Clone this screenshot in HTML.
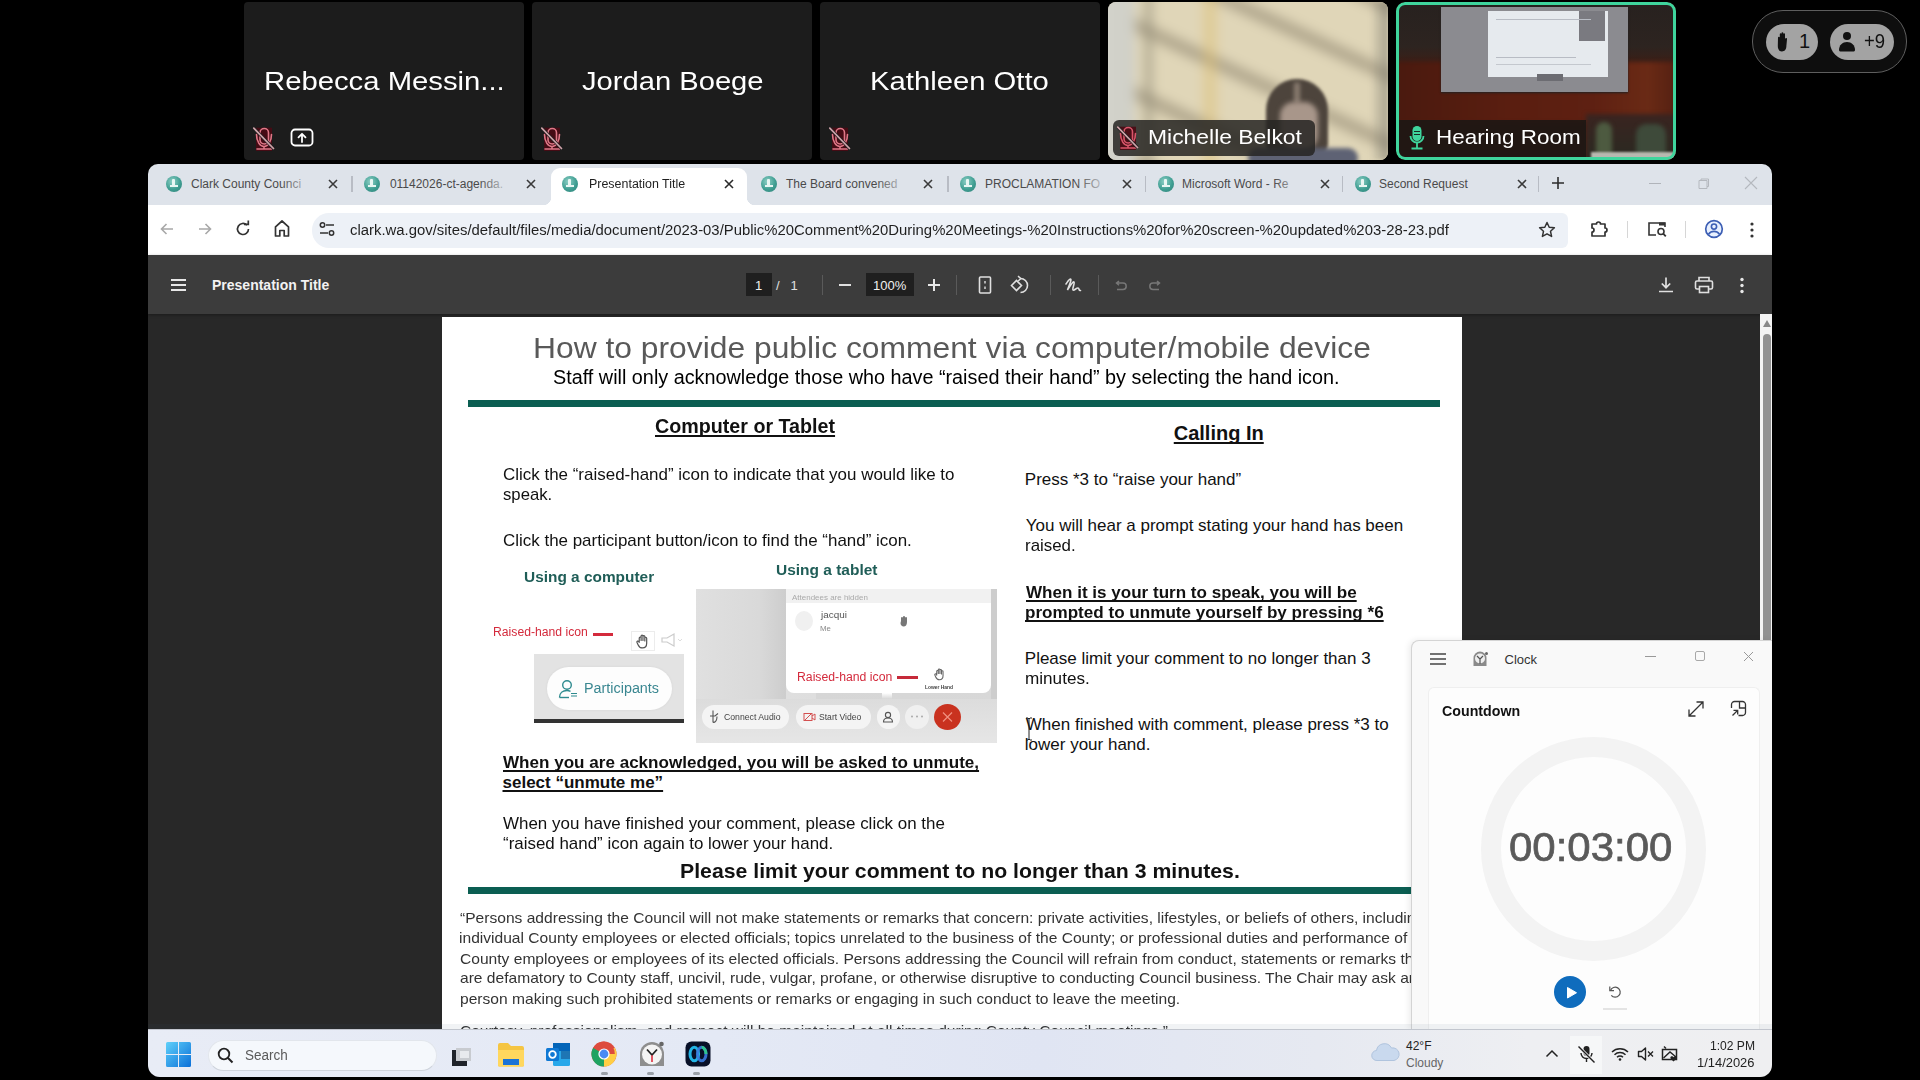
<!DOCTYPE html>
<html><head><meta charset="utf-8"><title>Meeting</title>
<style>
html,body{margin:0;padding:0;width:1920px;height:1080px;overflow:hidden;background:#000;font-family:"Liberation Sans",sans-serif;}
.a{position:absolute;}
.t{position:absolute;white-space:nowrap;transform-origin:0 0;}
svg{position:absolute;overflow:visible;}
.tile{position:absolute;top:2px;width:280px;height:158px;border-radius:4px;background:#1c1c1c;overflow:hidden;}
</style></head><body>

<div class="tile" style="left:244px"></div>
<div class="tile" style="left:532px"></div>
<div class="tile" style="left:820px"></div>
<svg style="left:253px;top:127px" width="22" height="25" viewBox="0 0 22 25"><rect x="3" y="0.7" width="16" height="23.3" fill="#4a0a14" opacity=".9"/><g fill="none" stroke="#e07888" stroke-width="1.6" stroke-linecap="round"><rect x="7" y="1.5" width="8.5" height="15.5" rx="4.2"/><path d="M3.5 7.5C3.5 14.5 7 19.5 11 19.5S18.5 14.5 18.5 7.5M11 19.5v2M4 22h14.5"/></g><path d="M0.8 1.2L20.5 21.5" stroke="#1c1c1c" stroke-width="3.2"/><path d="M0.8 1.2L20.5 21.5" stroke="#cfa3aa" stroke-width="1.7" stroke-linecap="round"/></svg>
<svg style="left:290px;top:128px" width="24" height="20" viewBox="0 0 24 20"><rect x="1.5" y="1.5" width="21" height="16" rx="3.5" fill="none" stroke="#fff" stroke-width="1.8"/><path d="M12 14V6M8.5 9.3L12 5.8l3.5 3.5" fill="none" stroke="#fff" stroke-width="1.8" stroke-linecap="round" stroke-linejoin="round"/></svg>
<svg style="left:541px;top:127px" width="22" height="25" viewBox="0 0 22 25"><rect x="3" y="0.7" width="16" height="23.3" fill="#4a0a14" opacity=".9"/><g fill="none" stroke="#e07888" stroke-width="1.6" stroke-linecap="round"><rect x="7" y="1.5" width="8.5" height="15.5" rx="4.2"/><path d="M3.5 7.5C3.5 14.5 7 19.5 11 19.5S18.5 14.5 18.5 7.5M11 19.5v2M4 22h14.5"/></g><path d="M0.8 1.2L20.5 21.5" stroke="#1c1c1c" stroke-width="3.2"/><path d="M0.8 1.2L20.5 21.5" stroke="#cfa3aa" stroke-width="1.7" stroke-linecap="round"/></svg>
<svg style="left:829px;top:127px" width="22" height="25" viewBox="0 0 22 25"><rect x="3" y="0.7" width="16" height="23.3" fill="#4a0a14" opacity=".9"/><g fill="none" stroke="#e07888" stroke-width="1.6" stroke-linecap="round"><rect x="7" y="1.5" width="8.5" height="15.5" rx="4.2"/><path d="M3.5 7.5C3.5 14.5 7 19.5 11 19.5S18.5 14.5 18.5 7.5M11 19.5v2M4 22h14.5"/></g><path d="M0.8 1.2L20.5 21.5" stroke="#1c1c1c" stroke-width="3.2"/><path d="M0.8 1.2L20.5 21.5" stroke="#cfa3aa" stroke-width="1.7" stroke-linecap="round"/></svg>

<div class="tile" style="left:1108px;background:#d8ceb0;border-radius:8px">
  <div class="a" style="left:-20px;top:-20px;width:320px;height:200px;filter:blur(5px);
     background:
       linear-gradient(90deg, #d4d4cc 0px, #d0d0c8 42px, rgba(0,0,0,0) 52px),
       linear-gradient(90deg, rgba(0,0,0,0) 52px, rgba(150,145,125,.55) 60px, rgba(0,0,0,0) 70px),
       linear-gradient(90deg, rgba(0,0,0,0) 110px, rgba(222,190,110,.5) 122px, rgba(0,0,0,0) 134px),
       repeating-linear-gradient(25deg, rgba(0,0,0,0) 0px, rgba(0,0,0,0) 26px, rgba(140,130,108,.6) 38px, rgba(0,0,0,0) 50px, rgba(0,0,0,0) 62px),
       #e0d6b8"></div>
  <div class="a" style="left:262px;top:0;width:18px;height:158px;background:linear-gradient(90deg,rgba(120,118,108,0),rgba(120,118,108,.55));filter:blur(2px)"></div>
  <div class="a" style="left:158px;top:77px;width:62px;height:80px;border-radius:31px 31px 16px 16px;background:#4d443c;filter:blur(1.5px)"></div>
  <div class="a" style="left:186px;top:80px;width:6px;height:22px;border-radius:3px;background:#8a7c70;filter:blur(2px)"></div>
  <div class="a" style="left:172px;top:100px;width:38px;height:50px;border-radius:14px 14px 18px 18px;background:#a8968a;filter:blur(2.5px)"></div>
  <div class="a" style="left:140px;top:146px;width:110px;height:20px;border-radius:12px;background:#5e6274;filter:blur(2px)"></div>
  <div class="a" style="left:5px;top:118px;width:202px;height:36px;border-radius:6px;background:rgba(38,36,34,.85)"></div>
</div>
<svg style="left:1117px;top:126px" width="22" height="25" viewBox="0 0 22 25"><rect x="3" y="0.7" width="16" height="23.3" fill="#4a0a14" opacity=".9"/><g fill="none" stroke="#d9566a" stroke-width="1.6" stroke-linecap="round"><rect x="7" y="1.5" width="8.5" height="15.5" rx="4.2"/><path d="M3.5 7.5C3.5 14.5 7 19.5 11 19.5S18.5 14.5 18.5 7.5M11 19.5v2M4 22h14.5"/></g><path d="M0.8 1.2L20.5 21.5" stroke="#1c1c1c" stroke-width="3.2"/><path d="M0.8 1.2L20.5 21.5" stroke="#cfa3aa" stroke-width="1.7" stroke-linecap="round"/></svg>

<div class="tile" style="left:1396px;background:#4e1b10;border-radius:9px">
  <div class="a" style="left:0;top:0;width:280px;height:64px;background:linear-gradient(180deg,#27211f 0%,#2d2420 70%,#3e1d14 100%)"></div>
  <div class="a" style="left:0;top:60px;width:280px;height:60px;background:linear-gradient(90deg,#4a1a0f,#5a1e10 40%,#5e2012 70%,#6a2a15 90%,#552012);filter:blur(2px)"></div>
  <div class="a" style="left:45px;top:5px;width:187px;height:85px;background:#8b8b90;box-shadow:0 1px 2px #222"></div>
  <div class="a" style="left:92px;top:9px;width:120px;height:66px;background:#e6eaee"></div>
  <div class="a" style="left:183px;top:9px;width:26px;height:30px;background:#7a7a80"></div>
  <div class="a" style="left:141px;top:72px;width:26px;height:7px;background:#6c6c72"></div>
  <div class="a" style="left:100px;top:17px;width:95px;height:1px;background:#b8bcc4"></div>
  <div class="a" style="left:100px;top:55px;width:80px;height:1px;background:#b8bcc4"></div>
  <div class="a" style="left:100px;top:62px;width:95px;height:1px;background:#c4c8ce"></div>
  <div class="a" style="left:190px;top:112px;width:90px;height:46px;background:linear-gradient(180deg,#3a2420,#2a2a22);filter:blur(2px)"></div><div class="a" style="left:200px;top:120px;width:16px;height:34px;border-radius:8px 8px 2px 2px;background:#4d5a40;filter:blur(2px)"></div><div class="a" style="left:240px;top:122px;width:30px;height:32px;border-radius:10px 10px 2px 2px;background:#3e4a3a;filter:blur(2px)"></div>
  <div class="a" style="left:195px;top:150px;width:85px;height:8px;background:#b8b8b0;filter:blur(1px)"></div>
  <div class="a" style="left:0;top:118px;width:190px;height:38px;background:rgba(22,22,20,.8)"></div>
  <div class="a" style="left:0;top:0;width:274px;height:152px;border:3px solid #3fd59d;border-radius:9px"></div>
</div>
<svg style="left:1409px;top:125px" width="16" height="25" viewBox="0 0 16 25"><rect x="3.5" y="1" width="9" height="15" rx="4.5" fill="#3fd59d"/><path d="M1.5 11a6.5 6.5 0 0 0 13 0" fill="none" stroke="#3fd59d" stroke-width="1.8"/><path d="M8 18v5M2.5 23.5h11" stroke="#3fd59d" stroke-width="1.8" fill="none"/><path d="M5 6.5h6M5 9.5h6" stroke="#1a2a24" stroke-width="1"/></svg>

<div class="a" style="left:1752px;top:10px;width:153px;height:61px;border-radius:31px;background:#0e0e0e;border:1.5px solid #5e5e5e"></div>
<div class="a" style="left:1766px;top:24px;width:52px;height:36px;border-radius:18px;background:#a3a3a3"></div>
<div class="a" style="left:1830px;top:24px;width:64px;height:36px;border-radius:18px;background:#a3a3a3"></div>
<svg style="left:1776px;top:31px" width="13" height="21" viewBox="0 0 13 21"><path d="M2 6.5c0-1 1.8-1 1.8 0V3c0-1 1.7-1 1.7 0V2c0-1 1.8-1 1.8 0v1c0-1 1.7-1 1.7 0v5c.3-1.3 2.2-1.2 2 .3l-.6 6.5C10.4 18.5 8.5 20.5 6 20.5S1.8 18.5 1.8 15z" fill="#111"/></svg>
<svg style="left:1838px;top:31px" width="18" height="21" viewBox="0 0 18 21"><circle cx="9" cy="5" r="4" fill="#111"/><path d="M1 19c0-5 3.5-8 8-8s8 3 8 8c0 1-1 1.5-2 1.5H3C2 20.5 1 20 1 19z" fill="#111"/></svg>

<div class="a" style="left:0;top:0;width:1920px;height:1080px;clip-path:inset(164px 148px 3px 148px round 10px 10px 12px 12px);z-index:1">
<div class="a" style="left:148px;top:164px;width:1624px;height:914px;background:#282828"></div>
<div class="a" style="left:148px;top:164px;width:1624px;height:41px;background:#dee3ea"></div>
<div class="a" style="left:551px;top:168px;width:196px;height:37px;background:#fff;border-radius:9px 9px 0 0"></div>
<div class="a" style="left:543px;top:197px;width:8px;height:8px;background:radial-gradient(circle at 0 0,#dee3ea 8px,#fff 8.5px)"></div>
<div class="a" style="left:747px;top:197px;width:8px;height:8px;background:radial-gradient(circle at 100% 0,#dee3ea 8px,#fff 8.5px)"></div>
<div class="a" style="left:165.5px;top:175.5px;width:16px;height:16px;border-radius:50%;background:radial-gradient(circle at 40% 35%,#8fd0c6 0,#3f9e92 55%,#2f7f76 100%)"><div class="a" style="left:6px;top:3px;width:3px;height:8px;background:#e8f6f3;border-radius:1px"></div><div class="a" style="left:4px;top:9px;width:8px;height:2px;background:#e8f6f3"></div></div>
<svg style="left:327.5px;top:178.5px" width="10" height="10" viewBox="0 0 10 10"><path d="M1 1l8 8M9 1l-8 8" stroke="#3a3a3a" stroke-width="1.6"/></svg>
<div class="a" style="left:363.5px;top:175.5px;width:16px;height:16px;border-radius:50%;background:radial-gradient(circle at 40% 35%,#8fd0c6 0,#3f9e92 55%,#2f7f76 100%)"><div class="a" style="left:6px;top:3px;width:3px;height:8px;background:#e8f6f3;border-radius:1px"></div><div class="a" style="left:4px;top:9px;width:8px;height:2px;background:#e8f6f3"></div></div>
<svg style="left:525.5px;top:178.5px" width="10" height="10" viewBox="0 0 10 10"><path d="M1 1l8 8M9 1l-8 8" stroke="#3a3a3a" stroke-width="1.6"/></svg>
<div class="a" style="left:562.0px;top:175.5px;width:16px;height:16px;border-radius:50%;background:radial-gradient(circle at 40% 35%,#8fd0c6 0,#3f9e92 55%,#2f7f76 100%)"><div class="a" style="left:6px;top:3px;width:3px;height:8px;background:#e8f6f3;border-radius:1px"></div><div class="a" style="left:4px;top:9px;width:8px;height:2px;background:#e8f6f3"></div></div>
<svg style="left:724.0px;top:178.5px" width="10" height="10" viewBox="0 0 10 10"><path d="M1 1l8 8M9 1l-8 8" stroke="#2a2a2a" stroke-width="1.6"/></svg>
<div class="a" style="left:760.5px;top:175.5px;width:16px;height:16px;border-radius:50%;background:radial-gradient(circle at 40% 35%,#8fd0c6 0,#3f9e92 55%,#2f7f76 100%)"><div class="a" style="left:6px;top:3px;width:3px;height:8px;background:#e8f6f3;border-radius:1px"></div><div class="a" style="left:4px;top:9px;width:8px;height:2px;background:#e8f6f3"></div></div>
<svg style="left:922.5px;top:178.5px" width="10" height="10" viewBox="0 0 10 10"><path d="M1 1l8 8M9 1l-8 8" stroke="#3a3a3a" stroke-width="1.6"/></svg>
<div class="a" style="left:960.0px;top:175.5px;width:16px;height:16px;border-radius:50%;background:radial-gradient(circle at 40% 35%,#8fd0c6 0,#3f9e92 55%,#2f7f76 100%)"><div class="a" style="left:6px;top:3px;width:3px;height:8px;background:#e8f6f3;border-radius:1px"></div><div class="a" style="left:4px;top:9px;width:8px;height:2px;background:#e8f6f3"></div></div>
<svg style="left:1122.0px;top:178.5px" width="10" height="10" viewBox="0 0 10 10"><path d="M1 1l8 8M9 1l-8 8" stroke="#3a3a3a" stroke-width="1.6"/></svg>
<div class="a" style="left:1157.5px;top:175.5px;width:16px;height:16px;border-radius:50%;background:radial-gradient(circle at 40% 35%,#8fd0c6 0,#3f9e92 55%,#2f7f76 100%)"><div class="a" style="left:6px;top:3px;width:3px;height:8px;background:#e8f6f3;border-radius:1px"></div><div class="a" style="left:4px;top:9px;width:8px;height:2px;background:#e8f6f3"></div></div>
<svg style="left:1319.5px;top:178.5px" width="10" height="10" viewBox="0 0 10 10"><path d="M1 1l8 8M9 1l-8 8" stroke="#3a3a3a" stroke-width="1.6"/></svg>
<div class="a" style="left:1354.5px;top:175.5px;width:16px;height:16px;border-radius:50%;background:radial-gradient(circle at 40% 35%,#8fd0c6 0,#3f9e92 55%,#2f7f76 100%)"><div class="a" style="left:6px;top:3px;width:3px;height:8px;background:#e8f6f3;border-radius:1px"></div><div class="a" style="left:4px;top:9px;width:8px;height:2px;background:#e8f6f3"></div></div>
<svg style="left:1516.5px;top:178.5px" width="10" height="10" viewBox="0 0 10 10"><path d="M1 1l8 8M9 1l-8 8" stroke="#3a3a3a" stroke-width="1.6"/></svg>
<div class="a" style="left:351.0px;top:176px;width:1.5px;height:16px;background:#b8bcc4"></div>
<div class="a" style="left:947.0px;top:176px;width:1.5px;height:16px;background:#b8bcc4"></div>
<div class="a" style="left:1144.5px;top:176px;width:1.5px;height:16px;background:#b8bcc4"></div>
<div class="a" style="left:1341.5px;top:176px;width:1.5px;height:16px;background:#b8bcc4"></div>
<div class="a" style="left:1537.5px;top:176px;width:1.5px;height:16px;background:#b8bcc4"></div>
<svg style="left:1551px;top:176px" width="14" height="14" viewBox="0 0 14 14"><path d="M7 1v12M1 7h12" stroke="#2c2c2c" stroke-width="1.6"/></svg>
<div class="a" style="left:1649px;top:183px;width:12px;height:1px;background:#b0b4ba"></div>
<svg style="left:1696px;top:177px" width="14" height="14" viewBox="0 0 14 14"><path d="M3 3.5h8v8H3z M5 3.5V2h7.5v7.5H11" fill="none" stroke="#b4b8be" stroke-width="1"/></svg>
<svg style="left:1744px;top:176px" width="14" height="14" viewBox="0 0 14 14"><path d="M1 1l12 12M13 1L1 13" stroke="#b4b8be" stroke-width="1.1"/></svg>
<div class="a" style="left:148px;top:205px;width:1624px;height:50px;background:#fff"></div>
<div class="a" style="left:312px;top:213px;width:1256px;height:35px;border-radius:17px 6px 6px 17px;background:#edf1f7"></div>
<svg style="left:158px;top:220px" width="18" height="18" viewBox="0 0 18 18"><path d="M15 9H3.5M8.5 4L3.5 9l5 5" fill="none" stroke="#a8a8a8" stroke-width="1.6"/></svg>
<svg style="left:196px;top:220px" width="18" height="18" viewBox="0 0 18 18"><path d="M3 9h11.5M9.5 4l5 5-5 5" fill="none" stroke="#a8a8a8" stroke-width="1.6"/></svg>
<svg style="left:234px;top:220px" width="18" height="18" viewBox="0 0 18 18"><path d="M14.5 9a5.5 5.5 0 1 1-1.6-3.9" fill="none" stroke="#333" stroke-width="1.7"/><path d="M10 4.3h4.3V0.5" fill="none" stroke="#333" stroke-width="1.7"/></svg>
<svg style="left:273px;top:219px" width="18" height="19" viewBox="0 0 18 19"><path d="M2.5 17V7.8L9 2l6.5 5.8V17h-4.3v-5.5H6.8V17z" fill="none" stroke="#333" stroke-width="1.7" stroke-linejoin="round"/></svg>
<svg style="left:318px;top:220px" width="18" height="18" viewBox="0 0 18 18"><circle cx="4.5" cy="5" r="2.2" fill="none" stroke="#333" stroke-width="1.5"/><path d="M8 5h8M2 13h8" stroke="#333" stroke-width="1.5"/><circle cx="13.5" cy="13" r="2.2" fill="none" stroke="#333" stroke-width="1.5"/></svg>
<svg style="left:1538px;top:221px" width="18" height="17" viewBox="0 0 18 17"><path d="M9 1.5l2.2 4.8 5.2.5-3.9 3.5 1.1 5.1L9 12.8l-4.6 2.6 1.1-5.1L1.6 6.8l5.2-.5z" fill="none" stroke="#333" stroke-width="1.5" stroke-linejoin="round"/></svg>
<svg style="left:1590px;top:220px" width="20" height="18" viewBox="0 0 20 18"><path d="M2 4h4.5a2 2 0 0 1 4 0H15v4a2 2 0 0 1 0 4v4H2v-4a2 2 0 0 0 0-4z" fill="none" stroke="#333" stroke-width="1.7" stroke-linejoin="round"/></svg>
<div class="a" style="left:1627px;top:221px;width:1px;height:17px;background:#d6d6d6"></div>
<svg style="left:1647px;top:220px" width="21" height="18" viewBox="0 0 21 18"><path d="M9 15H2V3h16v4" fill="none" stroke="#333" stroke-width="1.6"/><rect x="12" y="2.5" width="6" height="3" fill="#333"/><circle cx="14" cy="11.5" r="3" fill="none" stroke="#333" stroke-width="1.6"/><path d="M16.2 13.7l2.6 2.6" stroke="#333" stroke-width="1.8"/></svg>
<div class="a" style="left:1685px;top:221px;width:1px;height:17px;background:#d6d6d6"></div>
<svg style="left:1704px;top:219px" width="20" height="20" viewBox="0 0 20 20"><circle cx="10" cy="10" r="8.3" fill="#e8f0fe" stroke="#3d5fb4" stroke-width="1.7"/><circle cx="10" cy="7.6" r="2.6" fill="none" stroke="#3d5fb4" stroke-width="1.6"/><path d="M4.5 15.2c1.5-2 3.3-2.8 5.5-2.8s4 .8 5.5 2.8" fill="none" stroke="#3d5fb4" stroke-width="1.6"/></svg>
<svg style="left:1749px;top:221px" width="6" height="18" viewBox="0 0 6 18"><circle cx="3" cy="3" r="1.6" fill="#333"/><circle cx="3" cy="9" r="1.6" fill="#333"/><circle cx="3" cy="15" r="1.6" fill="#333"/></svg>
<div class="a" style="left:148px;top:255px;width:1624px;height:59px;background:#3c3c3c;box-shadow:0 1px 3px rgba(0,0,0,.35)"></div>
<svg style="left:170px;top:278px" width="17" height="14" viewBox="0 0 17 14"><path d="M1 2h15M1 7h15M1 12h15" stroke="#e8e8e8" stroke-width="1.8"/></svg>
<div class="a" style="left:746px;top:273px;width:26px;height:23px;background:#1f1f1f"></div>
<div class="a" style="left:866px;top:273px;width:48px;height:23px;background:#1f1f1f"></div>
<div class="a" style="left:822px;top:275px;width:1px;height:20px;background:#5a5a5a"></div>
<div class="a" style="left:956px;top:275px;width:1px;height:20px;background:#5a5a5a"></div>
<div class="a" style="left:1050px;top:275px;width:1px;height:20px;background:#5a5a5a"></div>
<div class="a" style="left:1098px;top:275px;width:1px;height:20px;background:#5a5a5a"></div>
<div class="a" style="left:839px;top:284px;width:12px;height:2px;background:#e0e0e0"></div>
<svg style="left:927px;top:278px" width="14" height="14" viewBox="0 0 14 14"><path d="M7 1v12M1 7h12" stroke="#e8e8e8" stroke-width="2"/></svg>
<svg style="left:978px;top:276px" width="14" height="18" viewBox="0 0 14 18"><rect x="1.5" y="1" width="11" height="16" rx="1" fill="none" stroke="#e0e0e0" stroke-width="1.6"/><path d="M7 5v2.5M7 10.5V13" stroke="#e0e0e0" stroke-width="1.4"/></svg>
<svg style="left:1010px;top:275px" width="20" height="20" viewBox="0 0 20 20"><path d="M1.5 10.5l5-5 5 5-5 5z" fill="none" stroke="#e0e0e0" stroke-width="1.6"/><path d="M10.5 3.5a7 7 0 0 1 0 14" fill="none" stroke="#e0e0e0" stroke-width="1.6"/><path d="M8 1.2l2.8 2.3L8.2 6" fill="none" stroke="#e0e0e0" stroke-width="1.5"/></svg>
<svg style="left:1064px;top:276px" width="20" height="18" viewBox="0 0 20 18"><path d="M2 8c1.5-2 3-5 4.5-5S5 10 3.5 14c2-3 5.5-9 6.5-8s-2 7-1 8c1.2 1 3-2 5-2 1.5 0 .5 3 2.5 2.5" fill="none" stroke="#e0e0e0" stroke-width="1.6" stroke-linecap="round"/></svg>
<svg style="left:1113px;top:277px" width="16" height="16" viewBox="0 0 16 16"><path d="M4 9.5h6a3.2 3.2 0 0 0 0-6.4H4M6 1L3.5 3.1 6 5.2" fill="none" stroke="#777" stroke-width="1.5" transform="translate(0 3)"/></svg>
<svg style="left:1147px;top:277px" width="16" height="16" viewBox="0 0 16 16"><path d="M12 9.5H6a3.2 3.2 0 0 1 0-6.4h6M10 1l2.5 2.1L10 5.2" fill="none" stroke="#777" stroke-width="1.5" transform="translate(0 3)"/></svg>
<svg style="left:1657px;top:276px" width="18" height="18" viewBox="0 0 18 18"><path d="M9 1.5v10M4.8 7.5L9 11.7l4.2-4.2M2 15.5h14" fill="none" stroke="#e0e0e0" stroke-width="1.7"/></svg>
<svg style="left:1694px;top:276px" width="20" height="18" viewBox="0 0 20 18"><path d="M5 5V1.5h10V5" fill="none" stroke="#e0e0e0" stroke-width="1.6"/><rect x="1.5" y="5" width="17" height="8" rx="1.5" fill="none" stroke="#e0e0e0" stroke-width="1.6"/><rect x="5.5" y="10.5" width="9" height="6" fill="#3c3c3c" stroke="#e0e0e0" stroke-width="1.6"/></svg>
<svg style="left:1739px;top:277px" width="6" height="18" viewBox="0 0 6 18"><circle cx="3" cy="2.5" r="1.7" fill="#e8e8e8"/><circle cx="3" cy="8.5" r="1.7" fill="#e8e8e8"/><circle cx="3" cy="14.5" r="1.7" fill="#e8e8e8"/></svg>
<div class="a" style="left:1760px;top:314px;width:12px;height:715px;background:#f4f4f4"></div>
<div class="a" style="left:1763px;top:334px;width:8px;height:690px;background:#929292;border-radius:4px 4px 0 0"></div>
<svg style="left:1762px;top:319px" width="10" height="9" viewBox="0 0 10 9"><path d="M1 8L5 1l4 7z" fill="#888"/></svg>
</div>
<div class="a" style="left:281px;top:174px;width:34px;height:20px;background:linear-gradient(90deg,rgba(0,0,0,0),#dee3ea);z-index:6"></div><div class="a" style="left:479px;top:174px;width:34px;height:20px;background:linear-gradient(90deg,rgba(0,0,0,0),#dee3ea);z-index:6"></div><div class="a" style="left:876px;top:174px;width:34px;height:20px;background:linear-gradient(90deg,rgba(0,0,0,0),#dee3ea);z-index:6"></div><div class="a" style="left:1075.5px;top:174px;width:34px;height:20px;background:linear-gradient(90deg,rgba(0,0,0,0),#dee3ea);z-index:6"></div><div class="a" style="left:1273px;top:174px;width:34px;height:20px;background:linear-gradient(90deg,rgba(0,0,0,0),#dee3ea);z-index:6"></div>

<div class="a" style="left:442px;top:317px;width:1020px;height:712px;background:#fff;z-index:2"></div>
<div class="a" style="left:468px;top:400px;width:972px;height:7px;background:#0b5e52;z-index:3"></div>
<div class="a" style="left:468px;top:887px;width:972px;height:7px;background:#0b5e52;z-index:3"></div>

<!-- computer image -->
<div class="a" style="left:593px;top:633px;width:20px;height:3px;background:#d42a3c;z-index:3"></div>
<div class="a" style="left:631px;top:631px;width:24px;height:20px;border:1px solid #ececec;box-sizing:border-box;z-index:3"></div>
<svg style="left:636px;top:634px;z-index:4" width="13" height="14.9" viewBox="0 0 14 16"><path d="M3.5 8V4.2a1 1 0 0 1 2 0V7M5.5 7V2.2a1 1 0 0 1 2 0V7M7.5 7V2.8a1 1 0 0 1 2 0V7.5M9.5 7.5V4.5a1 1 0 0 1 2 0V10c0 3-2 5-4.5 5S3 13.5 2.2 11.5L1 8.8a1 1 0 0 1 1.8-.8L3.5 9" fill="none" stroke="#555" stroke-width="1.3" stroke-linecap="round"/></svg>
<svg style="left:660px;top:633px;z-index:4" width="24" height="14" viewBox="0 0 24 14"><path d="M2 5h5l7-4v12l-7-4H2z" fill="none" stroke="#ccc" stroke-width="1.2"/><path d="M18 6l2 2 2-2" fill="none" stroke="#ddd" stroke-width="1"/></svg>
<div class="a" style="left:534px;top:654px;width:150px;height:68px;background:#e3e3e3;z-index:3"></div>
<div class="a" style="left:534px;top:719px;width:150px;height:4px;background:#333;z-index:3"></div>
<div class="a" style="left:547px;top:667px;width:125px;height:43px;border-radius:22px;background:#fdfdfd;box-shadow:0 0 3px rgba(0,0,0,.06);z-index:3"></div>
<svg style="left:558px;top:679px;z-index:4" width="20" height="20" viewBox="0 0 20 20"><circle cx="9" cy="6" r="4.3" fill="none" stroke="#2e8b8f" stroke-width="1.4"/><path d="M1.5 18.5c0-4.5 3.3-7 7.5-7 1.5 0 2.5.3 3.5.8" fill="none" stroke="#2e8b8f" stroke-width="1.4"/><path d="M13 14.5h6M13 17h6" stroke="#2e8b8f" stroke-width="1.2"/><path d="M1.5 18.5H11" stroke="#2e8b8f" stroke-width="1.4"/></svg>

<!-- tablet image -->
<div class="a" style="left:696px;top:589px;width:301px;height:154px;background:linear-gradient(90deg,#e2e2e2 0,#dedede 40%,#cfcfcf 29.5%,#d6d6d6 30%,#d8d8d8 100%);z-index:3"></div>
<div class="a" style="left:696px;top:589px;width:90px;height:110px;background:linear-gradient(90deg,#e0e0e0,#d9d9d9 70%,#cdcdcd);z-index:3"></div>
<div class="a" style="left:696px;top:699px;width:301px;height:44px;background:linear-gradient(180deg,#dcdcdc,#e6e6e6);z-index:3"></div>
<div class="a" style="left:991px;top:589px;width:6px;height:110px;background:#cdcdcd;z-index:3"></div>
<div class="a" style="left:786px;top:589px;width:205px;height:104px;background:#fff;border-radius:0 0 8px 8px;z-index:3"></div>
<div class="a" style="left:786px;top:589px;width:205px;height:14px;background:#f1f1f1;z-index:3"></div>
<div class="a" style="left:882px;top:693px;width:10px;height:6px;background:linear-gradient(180deg,#fff,rgba(255,255,255,0));z-index:3"></div>
<div class="a" style="left:795px;top:611px;width:18px;height:20px;border-radius:50%;background:#f0f0f0;z-index:3"></div>
<svg style="left:899px;top:615px;z-index:4" width="10" height="12" viewBox="0 0 10 12"><path d="M2 6V3a1 1 0 0 1 2 0V2a1 1 0 0 1 2 0v1a1 1 0 0 1 2 0v4c0 3-1.5 4.5-3.3 4.5S1.5 10 1.5 8z" fill="#777"/></svg>
<div class="a" style="left:897px;top:676px;width:21px;height:3px;background:#c62a3a;z-index:3"></div>
<svg style="left:934px;top:668px;z-index:4" width="11" height="12.6" viewBox="0 0 14 16"><path d="M3.5 8V4.2a1 1 0 0 1 2 0V7M5.5 7V2.2a1 1 0 0 1 2 0V7M7.5 7V2.8a1 1 0 0 1 2 0V7.5M9.5 7.5V4.5a1 1 0 0 1 2 0V10c0 3-2 5-4.5 5S3 13.5 2.2 11.5L1 8.8a1 1 0 0 1 1.8-.8L3.5 9" fill="none" stroke="#666" stroke-width="1.4" stroke-linecap="round"/></svg>

<div class="a" style="left:702px;top:705px;width:87px;height:24px;border-radius:12px;background:#f4f4f4;z-index:3"></div>
<div class="a" style="left:796px;top:705px;width:75px;height:24px;border-radius:12px;background:#f4f4f4;z-index:3"></div>
<div class="a" style="left:877px;top:705px;width:23px;height:24px;border-radius:12px;background:#f4f4f4;z-index:3"></div>
<div class="a" style="left:905px;top:705px;width:24px;height:24px;border-radius:12px;background:#f0f0f0;z-index:3"></div>
<div class="a" style="left:934px;top:704px;width:27px;height:26px;border-radius:50%;background:#c9321f;z-index:3"></div>
<svg style="left:941px;top:711px;z-index:4" width="13" height="12" viewBox="0 0 13 12"><path d="M2 1.5l9 9M11 1.5l-9 9" stroke="#f09080" stroke-width="1.2"/></svg>
<svg style="left:709px;top:709px;z-index:4" width="10" height="15" viewBox="0 0 10 15"><path d="M4 1.5v12M1 7h5l3-2.5M4 13.5c2 0 4-1 4-6" fill="none" stroke="#555" stroke-width="1.1"/></svg>
<svg style="left:803px;top:712px;z-index:4" width="13" height="10" viewBox="0 0 13 10"><rect x="1" y="1.5" width="8" height="7" fill="none" stroke="#d45050" stroke-width="1"/><path d="M9 4l3-2v6l-3-2M1 9l8-8" fill="none" stroke="#d45050" stroke-width="1"/></svg>
<svg style="left:882px;top:711px;z-index:4" width="12" height="12" viewBox="0 0 12 12"><circle cx="6" cy="4" r="2.6" fill="none" stroke="#555" stroke-width="1.1"/><path d="M1.5 11c0-2.5 2-4 4.5-4s4.5 1.5 4.5 4z" fill="none" stroke="#555" stroke-width="1.1"/></svg>
<svg style="left:910px;top:715px;z-index:4" width="14" height="3" viewBox="0 0 14 3"><circle cx="2" cy="1.5" r="1" fill="#aaa"/><circle cx="7" cy="1.5" r="1" fill="#aaa"/><circle cx="12" cy="1.5" r="1" fill="#aaa"/></svg>
<!-- cursor I-beam -->
<svg style="left:1025px;top:717px;z-index:6" width="8" height="24" viewBox="0 0 8 24"><path d="M1 1h2l1 1 1-1h2M4 2v20M1 23h2l1-1 1 1h2" fill="none" stroke="#222" stroke-width="1"/></svg>


<div class="a" style="left:1411px;top:640px;width:361px;height:389px;background:#f9f9f9;border:1px solid #d4d4d4;border-right:none;border-bottom:none;border-radius:8px 0 0 0;z-index:20;box-sizing:border-box;box-shadow:-2px 0 6px rgba(0,0,0,.08)"></div>
<div class="a" style="left:1428px;top:687px;width:332px;height:342px;background:#fdfdfd;border:1px solid #efefef;border-bottom:none;border-radius:6px 6px 0 0;z-index:20;box-sizing:border-box"></div>
<svg style="left:1429px;top:652px;z-index:21" width="18" height="14" viewBox="0 0 18 14"><path d="M1 2h16M1 7h16M1 12h16" stroke="#444" stroke-width="1.3"/></svg>
<svg style="left:1472px;top:651px;z-index:21" width="17" height="16" viewBox="0 0 17 16"><path d="M1.5 15V7a6.5 6.5 0 0 1 13 0v8z" fill="#8a8a8a"/><circle cx="8" cy="7.5" r="5" fill="#eee"/><path d="M8 8V13M8 8L5 5M8 8l3-3" stroke="#555" stroke-width="1.2"/><circle cx="14.5" cy="2.5" r="1.5" fill="#666"/></svg>
<div class="a" style="left:1645px;top:656px;width:11px;height:1px;background:#999;z-index:21"></div>
<div class="a" style="left:1695px;top:651px;width:10px;height:10px;border:1px solid #a8a8a8;border-radius:2px;box-sizing:border-box;z-index:21"></div>
<svg style="left:1743px;top:651px;z-index:21" width="11" height="11" viewBox="0 0 11 11"><path d="M1 1l9 9M10 1l-9 9" stroke="#999" stroke-width="1"/></svg>
<svg style="left:1687px;top:700px;z-index:21" width="18" height="18" viewBox="0 0 18 18"><path d="M2 16L16 2M9.5 2H16v6.5M2 9.5V16h6.5" fill="none" stroke="#333" stroke-width="1.3"/></svg>
<svg style="left:1730px;top:700px;z-index:21" width="18" height="18" viewBox="0 0 18 18"><path d="M1.5 8V4.5a3 3 0 0 1 3-3h8a3 3 0 0 1 3 3v8a3 3 0 0 1-3 3H8.5M9.5 1.5V8h6" fill="none" stroke="#333" stroke-width="1.3"/><path d="M2.5 15.5L7.5 10.5M3.5 10.3h4.2v4.2" fill="none" stroke="#333" stroke-width="1.3"/></svg>
<div class="a" style="left:1481px;top:737px;width:225px;height:224px;border-radius:50%;box-sizing:border-box;border:20px solid #f3f3f3;z-index:21"></div>
<div class="a" style="left:1554px;top:976px;width:32px;height:32px;border-radius:50%;background:#0f6cbd;z-index:21"></div>
<svg style="left:1565px;top:985px;z-index:22" width="14" height="16" viewBox="0 0 14 16"><path d="M2.5 2.5v10.5l9-5.25z" fill="#fff" stroke="#fff" stroke-width="1" stroke-linejoin="round"/></svg>
<svg style="left:1607px;top:984px;z-index:21" width="16" height="16" viewBox="0 0 16 16"><path d="M3.5 6.5a5 5 0 1 1 .8 4.8" fill="none" stroke="#555" stroke-width="1.2"/><path d="M2.8 2.5v4.2H7" fill="none" stroke="#555" stroke-width="1.2"/></svg>
<div class="a" style="left:1603px;top:1008px;width:24px;height:2px;background:#e4e4e4;z-index:21"></div>


<div class="a" style="left:148px;top:1024px;width:1624px;height:5px;background:rgba(60,80,120,.07);z-index:29"></div>
<div class="a" style="left:148px;top:1029px;width:1624px;height:48px;background:linear-gradient(90deg,#e8ecf6 0,#e4e9f5 35%,#e0e5f3 55%,#e6e9f1 72%,#eeeff2 85%,#efeff1 100%);border-top:1px solid #c2c6ce;box-sizing:border-box;border-radius:0 0 12px 12px;z-index:30"></div>
<svg style="left:166px;top:1042px;z-index:31" width="25" height="25" viewBox="0 0 25 25"><defs><linearGradient id="wg" x1="0" y1="0" x2="1" y2="1"><stop offset="0" stop-color="#5fd0fa"/><stop offset="1" stop-color="#0a6fd8"/></linearGradient></defs><path d="M0 1.5A1.5 1.5 0 0 1 1.5 0H12v12H0zM13 0h10.5A1.5 1.5 0 0 1 25 1.5V12H13zM0 13h12v12H1.5A1.5 1.5 0 0 1 0 23.5zM13 13h12v10.5a1.5 1.5 0 0 1-1.5 1.5H13z" fill="url(#wg)"/></svg>
<div class="a" style="left:208px;top:1040px;width:229px;height:31px;border-radius:16px;background:#f5f8fc;border:1px solid #e2e6ec;border-bottom-color:#cfd4dc;box-sizing:border-box;z-index:31"></div>
<svg style="left:217px;top:1047px;z-index:32" width="17" height="17" viewBox="0 0 17 17"><circle cx="7" cy="7" r="5.3" fill="none" stroke="#222" stroke-width="1.8"/><path d="M11 11l4.5 4.5" stroke="#222" stroke-width="2"/></svg>
<svg style="left:451px;top:1047px;z-index:31" width="21" height="20" viewBox="0 0 21 20"><rect x="5" y="1" width="15" height="13" fill="#c8cbd0"/><rect x="9" y="4" width="9" height="7" fill="#e8eaee"/><path d="M1 3h4v11h11v5H1z" fill="#1f232a"/></svg>
<svg style="left:497px;top:1042px;z-index:31" width="28" height="25" viewBox="0 0 28 25"><path d="M1 3a2 2 0 0 1 2-2h8l3 3h11a2 2 0 0 1 2 2v17a1.5 1.5 0 0 1-1.5 1.5h-23A1.5 1.5 0 0 1 1 23z" fill="#f5c542"/><path d="M1 8h26v15a1.5 1.5 0 0 1-1.5 1.5h-23A1.5 1.5 0 0 1 1 23z" fill="#ffd75e"/><rect x="6" y="17" width="16" height="6" fill="#1a73d6"/></svg>
<svg style="left:545px;top:1042px;z-index:31" width="26" height="25" viewBox="0 0 26 25"><rect x="8" y="1" width="17" height="23" rx="1.5" fill="#28a8ea"/><rect x="8" y="1" width="17" height="8" fill="#0364b8"/><rect x="16" y="9" width="9" height="8" fill="#14447d" opacity=".5"/><rect x="1" y="6" width="13" height="13" rx="1.5" fill="#0f78d4"/><circle cx="7.5" cy="12.5" r="3.3" fill="none" stroke="#fff" stroke-width="1.8"/></svg>
<svg style="left:591px;top:1041px;z-index:31" width="26" height="26" viewBox="0 0 26 26"><circle cx="13" cy="13" r="12.5" fill="#dd4b3e"/><path d="M13 13L2.2 6.7A12.5 12.5 0 0 0 13 25.5z" fill="#1ea362"/><path d="M13 13v12.5A12.5 12.5 0 0 0 23.8 6.7z" fill="#ffce44"/><path d="M13 0.5A12.5 12.5 0 0 0 2.2 6.7L13 13h10.8A12.5 12.5 0 0 0 13 .5z" fill="#dd4b3e"/><circle cx="13" cy="13" r="5.6" fill="#fff"/><circle cx="13" cy="13" r="4.4" fill="#4a8af4"/></svg>
<svg style="left:639px;top:1041px;z-index:31" width="26" height="26" viewBox="0 0 26 26"><path d="M1 25V13A12 12 0 0 1 25 13v12z" fill="#8e8e8e"/><circle cx="13" cy="13.5" r="10" fill="#f4f4f4"/><path d="M13 14V21" stroke="#d23" stroke-width="1.5"/><path d="M13 14L8 8.5M13 14l5-5.5" stroke="#222" stroke-width="1.8"/><circle cx="22.5" cy="3" r="2.3" fill="#666"/></svg>
<svg style="left:685px;top:1041px;z-index:31" width="26" height="26" viewBox="0 0 26 26"><rect x="0.5" y="0.5" width="25" height="25" rx="6" fill="#081028"/><ellipse cx="9.3" cy="13" rx="4.3" ry="6.8" fill="none" stroke="#22b4e6" stroke-width="3"/><ellipse cx="16.7" cy="13" rx="4.3" ry="6.8" fill="none" stroke="#3b7ce0" stroke-width="3" opacity=".9"/><path d="M16.7 6.2a4.3 6.8 0 0 1 4.3 6.8" fill="none" stroke="#2fc48e" stroke-width="3"/></svg>
<div class="a" style="left:601px;top:1072px;width:7px;height:3px;border-radius:2px;background:#9aa0a8;z-index:31"></div>
<div class="a" style="left:647px;top:1072px;width:7px;height:3px;border-radius:2px;background:#9aa0a8;z-index:31"></div>
<div class="a" style="left:693px;top:1072px;width:7px;height:3px;border-radius:2px;background:#9aa0a8;z-index:31"></div>
<svg style="left:1371px;top:1042px;z-index:31" width="29" height="20" viewBox="0 0 29 20"><path d="M6 18.5a5 5 0 0 1-.5-10A8 8 0 0 1 20.5 6a6 6 0 0 1 2.5 12.5z" fill="#c9d9ee" stroke="#b0c4de" stroke-width="1"/></svg>
<svg style="left:1545px;top:1049px;z-index:31" width="14" height="9" viewBox="0 0 14 9"><path d="M1.5 7.5L7 2l5.5 5.5" fill="none" stroke="#222" stroke-width="1.5"/></svg>
<div class="a" style="left:1570px;top:1036px;width:32px;height:38px;background:#f6f7f8;z-index:31"></div>
<svg style="left:1577px;top:1045px;z-index:32" width="19" height="19" viewBox="0 0 19 19"><rect x="6.5" y="1" width="6" height="10" rx="3" fill="#222"/><path d="M4 8a5.5 5.5 0 0 0 11 0M9.5 13.5V17" fill="none" stroke="#222" stroke-width="1.4"/><path d="M1.5 1.5l16 16" stroke="#f6f7f8" stroke-width="3"/><path d="M1.5 1.5l16 16" stroke="#222" stroke-width="1.4"/></svg>
<svg style="left:1611px;top:1047px;z-index:31" width="18" height="14" viewBox="0 0 18 14"><path d="M1 5a11.5 11.5 0 0 1 16 0M3.5 7.7a8 8 0 0 1 11 0M6 10.3a4.3 4.3 0 0 1 6 0" fill="none" stroke="#222" stroke-width="1.5"/><circle cx="9" cy="12.5" r="1.3" fill="#222"/></svg>
<svg style="left:1637px;top:1047px;z-index:31" width="17" height="14" viewBox="0 0 17 14"><path d="M1.5 4.5h3l4-3.5v12l-4-3.5h-3z" fill="none" stroke="#222" stroke-width="1.4" stroke-linejoin="round"/><path d="M11 4.5l5 5M16 4.5l-5 5" stroke="#222" stroke-width="1.3"/></svg>
<svg style="left:1661px;top:1046px;z-index:31" width="19" height="16" viewBox="0 0 19 16"><path d="M1.5 3.5h14v10h-14z" fill="none" stroke="#222" stroke-width="1.5"/><path d="M2.5 12L9 6l6 5" fill="none" stroke="#222" stroke-width="1.4"/><path d="M12.5 15.5l-3-3a1.6 1.6 0 0 1 3-1.3 1.6 1.6 0 0 1 3 1.3z" fill="#222"/><path d="M3 0.5l2 2" stroke="#222" stroke-width="1.4"/></svg>

<div class="t " style="left:264.25px;top:68.40px;font-size:26px;line-height:26px;color:#ffffff;font-weight:normal;z-index:5;transform:scaleX(1.1257);">Rebecca Messin...</div>
<div class="t " style="left:581.50px;top:68.40px;font-size:26px;line-height:26px;color:#ffffff;font-weight:normal;z-index:5;transform:scaleX(1.1211);">Jordan Boege</div>
<div class="t " style="left:870.05px;top:68.40px;font-size:26px;line-height:26px;color:#ffffff;font-weight:normal;z-index:5;transform:scaleX(1.1243);">Kathleen Otto</div>
<div class="t " style="left:1147.71px;top:125.75px;font-size:21px;line-height:21px;color:#ffffff;font-weight:normal;z-index:6;transform:scaleX(1.0898);">Michelle Belkot</div>
<div class="t " style="left:1435.93px;top:125.75px;font-size:21px;line-height:21px;color:#ffffff;font-weight:normal;z-index:6;transform:scaleX(1.0680);">Hearing Room</div>
<div class="t " style="left:532.88px;top:332.50px;font-size:30px;line-height:30px;color:#595959;font-weight:normal;z-index:5;transform:scaleX(1.0601);">How to provide public comment via computer/mobile device</div>
<div class="t " style="left:553.00px;top:367.00px;font-size:20px;line-height:20px;color:#000;font-weight:normal;z-index:5;transform:scaleX(0.9899);">Staff will only acknowledge those who have “raised their hand” by selecting the hand icon.</div>
<div class="t " style="left:654.60px;top:416.40px;font-size:20px;line-height:20px;color:#111;font-weight:bold;z-index:5;transform:scaleX(0.9841);text-decoration:underline;text-decoration-skip-ink:none;text-decoration-thickness:2px;text-underline-offset:2px">Computer or Tablet</div>
<div class="t " style="left:502.50px;top:465.85px;font-size:17px;line-height:17px;color:#111;font-weight:normal;z-index:5;transform:scaleX(0.9974);">Click the “raised-hand” icon to indicate that you would like to</div>
<div class="t " style="left:502.50px;top:486.05px;font-size:17px;line-height:17px;color:#111;font-weight:normal;z-index:5;transform:scaleX(0.9825);">speak.</div>
<div class="t " style="left:502.50px;top:531.55px;font-size:17px;line-height:17px;color:#111;font-weight:normal;z-index:5;transform:scaleX(0.9968);">Click the participant button/icon to find the “hand” icon.</div>
<div class="t " style="left:523.70px;top:568.95px;font-size:15px;line-height:15px;color:#1f5d57;font-weight:bold;z-index:5;transform:scaleX(1.0272);">Using a computer</div>
<div class="t " style="left:775.50px;top:561.75px;font-size:15px;line-height:15px;color:#1f5d57;font-weight:bold;z-index:5;transform:scaleX(1.0320);">Using a tablet</div>
<div class="t " style="left:502.50px;top:753.55px;font-size:17px;line-height:17px;color:#111;font-weight:bold;z-index:5;transform:scaleX(1.0039);text-decoration:underline;text-decoration-skip-ink:none;text-decoration-thickness:1.5px;text-underline-offset:2px">When you are acknowledged, you will be asked to unmute,</div>
<div class="t " style="left:502.50px;top:773.95px;font-size:17px;line-height:17px;color:#111;font-weight:bold;z-index:5;text-decoration:underline;text-decoration-skip-ink:none;text-decoration-thickness:1.5px;text-underline-offset:2px">select “unmute me”</div>
<div class="t " style="left:502.50px;top:815.15px;font-size:17px;line-height:17px;color:#111;font-weight:normal;z-index:5;transform:scaleX(0.9972);">When you have finished your comment, please click on the</div>
<div class="t " style="left:502.50px;top:835.45px;font-size:17px;line-height:17px;color:#111;font-weight:normal;z-index:5;transform:scaleX(0.9955);">“raised hand” icon again to lower your hand.</div>
<div class="t " style="left:680.29px;top:859.95px;font-size:21px;line-height:21px;color:#111;font-weight:bold;z-index:5;transform:scaleX(1.0122);">Please limit your comment to no longer than 3 minutes.</div>
<div class="t " style="left:1173.75px;top:422.60px;font-size:20px;line-height:20px;color:#111;font-weight:bold;z-index:5;text-decoration:underline;text-decoration-skip-ink:none;text-decoration-thickness:2px;text-underline-offset:2px">Calling In</div>
<div class="t " style="left:1024.80px;top:471.35px;font-size:17px;line-height:17px;color:#111;font-weight:normal;z-index:5;">Press *3 to “raise your hand”</div>
<div class="t " style="left:1025.80px;top:517.25px;font-size:17px;line-height:17px;color:#111;font-weight:normal;z-index:5;">You will hear a prompt stating your hand has been</div>
<div class="t " style="left:1024.81px;top:537.45px;font-size:17px;line-height:17px;color:#111;font-weight:normal;z-index:5;transform:scaleX(0.9939);">raised.</div>
<div class="t " style="left:1025.80px;top:583.55px;font-size:17px;line-height:17px;color:#111;font-weight:bold;z-index:5;transform:scaleX(1.0031);text-decoration:underline;text-decoration-skip-ink:none;text-decoration-thickness:1.5px;text-underline-offset:2px">When it is your turn to speak, you will be</div>
<div class="t " style="left:1024.80px;top:603.55px;font-size:17px;line-height:17px;color:#111;font-weight:bold;z-index:5;transform:scaleX(1.0045);text-decoration:underline;text-decoration-skip-ink:none;text-decoration-thickness:1.5px;text-underline-offset:2px">prompted to unmute yourself by pressing *6</div>
<div class="t " style="left:1024.80px;top:649.55px;font-size:17px;line-height:17px;color:#111;font-weight:normal;z-index:5;">Please limit your comment to no longer than 3</div>
<div class="t " style="left:1024.79px;top:669.95px;font-size:17px;line-height:17px;color:#111;font-weight:normal;z-index:5;transform:scaleX(1.0076);">minutes.</div>
<div class="t " style="left:1025.80px;top:715.55px;font-size:17px;line-height:17px;color:#111;font-weight:normal;z-index:5;">When finished with comment, please press *3 to</div>
<div class="t " style="left:1024.80px;top:735.95px;font-size:17px;line-height:17px;color:#111;font-weight:normal;z-index:5;">lower your hand.</div>
<div class="t " style="left:460.40px;top:909.75px;font-size:15px;line-height:15px;color:#333;font-weight:normal;z-index:5;transform:scaleX(1.0390);">“Persons addressing the Council will not make statements or remarks that concern: private activities, lifestyles, or beliefs of others, including</div>
<div class="t " style="left:459.36px;top:929.95px;font-size:15px;line-height:15px;color:#333;font-weight:normal;z-index:5;transform:scaleX(1.0390);">individual County employees or elected officials; topics unrelated to the business of the County; or professional duties and performance of</div>
<div class="t " style="left:460.40px;top:950.75px;font-size:15px;line-height:15px;color:#333;font-weight:normal;z-index:5;transform:scaleX(1.0390);">County employees or employees of its elected officials. Persons addressing the Council will refrain from conduct, statements or remarks that</div>
<div class="t " style="left:460.40px;top:970.25px;font-size:15px;line-height:15px;color:#333;font-weight:normal;z-index:5;transform:scaleX(1.0390);">are defamatory to County staff, uncivil, rude, vulgar, profane, or otherwise disruptive to conducting Council business. The Chair may ask any</div>
<div class="t " style="left:460.40px;top:990.75px;font-size:15px;line-height:15px;color:#333;font-weight:normal;z-index:5;transform:scaleX(1.0394);">person making such prohibited statements or remarks or engaging in such conduct to leave the meeting.</div>
<div class="t " style="left:460.40px;top:1022.75px;font-size:15px;line-height:15px;color:#333;font-weight:normal;z-index:5;transform:scaleX(1.0360);">Courtesy, professionalism, and respect will be maintained at all times during County Council meetings.”</div>
<div class="t " style="left:1799.00px;top:31.00px;font-size:20px;line-height:20px;color:#111;font-weight:normal;z-index:5;">1</div>
<div class="t " style="left:1863.50px;top:31.00px;font-size:20px;line-height:20px;color:#111;font-weight:normal;z-index:5;transform:scaleX(0.9259);">+9</div>
<div class="t " style="left:191.00px;top:177.80px;font-size:12px;line-height:12px;color:#4a4a4a;font-weight:normal;z-index:5;">Clark County Counci</div>
<div class="t " style="left:389.90px;top:177.80px;font-size:12px;line-height:12px;color:#4a4a4a;font-weight:normal;z-index:5;">01142026-ct-agenda.</div>
<div class="t " style="left:589.00px;top:177.80px;font-size:12px;line-height:12px;color:#1f1f1f;font-weight:normal;z-index:5;transform:scaleX(1.0369);">Presentation Title</div>
<div class="t " style="left:786.00px;top:177.80px;font-size:12px;line-height:12px;color:#4a4a4a;font-weight:normal;z-index:5;">The Board convened</div>
<div class="t " style="left:985.00px;top:177.80px;font-size:12px;line-height:12px;color:#4a4a4a;font-weight:normal;z-index:5;">PROCLAMATION FO</div>
<div class="t " style="left:1182.00px;top:177.80px;font-size:12px;line-height:12px;color:#4a4a4a;font-weight:normal;z-index:5;">Microsoft Word - Re</div>
<div class="t " style="left:1379.00px;top:177.80px;font-size:12px;line-height:12px;color:#4a4a4a;font-weight:normal;z-index:5;">Second Request</div>
<div class="t " style="left:349.50px;top:223.30px;font-size:14px;line-height:14px;color:#1f1f1f;font-weight:normal;z-index:5;transform:scaleX(1.0626);">clark.wa.gov/sites/default/files/media/document/2023-03/Public%20Comment%20During%20Meetings-%20Instructions%20for%20screen-%20updated%203-28-23.pdf</div>
<div class="t " style="left:212.00px;top:278.10px;font-size:14px;line-height:14px;color:#f2f2f2;font-weight:bold;z-index:5;">Presentation Title</div>
<div class="t " style="left:755.00px;top:278.95px;font-size:13px;line-height:13px;color:#f0f0f0;font-weight:normal;z-index:5;">1</div>
<div class="t " style="left:776.00px;top:278.95px;font-size:13px;line-height:13px;color:#e0e0e0;font-weight:normal;z-index:5;">/</div>
<div class="t " style="left:790.50px;top:278.95px;font-size:13px;line-height:13px;color:#e0e0e0;font-weight:normal;z-index:5;">1</div>
<div class="t " style="left:873.00px;top:278.95px;font-size:13px;line-height:13px;color:#f0f0f0;font-weight:normal;z-index:5;">100%</div>
<div class="t " style="left:492.50px;top:625.60px;font-size:12px;line-height:12px;color:#d42a3c;font-weight:normal;z-index:6;transform:scaleX(1.0160);">Raised-hand icon</div>
<div class="t " style="left:583.97px;top:681.10px;font-size:14px;line-height:14px;color:#3a8791;font-weight:normal;z-index:6;transform:scaleX(1.0257);">Participants</div>
<div class="t " style="left:797.00px;top:671.40px;font-size:12px;line-height:12px;color:#d42a3c;font-weight:normal;z-index:6;transform:scaleX(1.0203);">Raised-hand icon</div>
<div class="t " style="left:792.00px;top:594.05px;font-size:7px;line-height:7px;color:#aaa;font-weight:normal;z-index:6;transform:scaleX(1.1401);">Attendees are hidden</div>
<div class="t " style="left:821.10px;top:611.35px;font-size:9px;line-height:9px;color:#555;font-weight:normal;z-index:6;transform:scaleX(1.1013);">jacqui</div>
<div class="t " style="left:820.00px;top:625.05px;font-size:7px;line-height:7px;color:#888;font-weight:normal;z-index:6;transform:scaleX(1.1189);">Me</div>
<div class="t " style="left:924.50px;top:684.75px;font-size:5px;line-height:5px;color:#444;font-weight:bold;z-index:6;transform:scaleX(0.9804);">Lower Hand</div>
<div class="t " style="left:724.00px;top:713.35px;font-size:9px;line-height:9px;color:#444;font-weight:normal;z-index:6;transform:scaleX(0.9655);">Connect Audio</div>
<div class="t " style="left:818.70px;top:713.35px;font-size:9px;line-height:9px;color:#444;font-weight:normal;z-index:6;transform:scaleX(0.9536);">Start Video</div>
<div class="t " style="left:1504.50px;top:653.45px;font-size:13px;line-height:13px;color:#333;font-weight:normal;z-index:22;">Clock</div>
<div class="t " style="left:1442.00px;top:703.25px;font-size:15px;line-height:15px;color:#111;font-weight:bold;z-index:22;transform:scaleX(0.9477);">Countdown</div>
<div class="t " style="left:1508.95px;top:826.50px;font-size:40px;line-height:40px;color:#5a5a5a;font-weight:normal;z-index:22;transform:scaleX(1.0492);-webkit-text-stroke:0.7px #5a5a5a">00:03:00</div>
<div class="t " style="left:245.00px;top:1048.10px;font-size:14px;line-height:14px;color:#5a5a5a;font-weight:normal;z-index:33;transform:scaleX(0.9639);">Search</div>
<div class="t " style="left:1406.00px;top:1040.20px;font-size:12px;line-height:12px;color:#222;font-weight:normal;z-index:33;">42°F</div>
<div class="t " style="left:1406.00px;top:1056.70px;font-size:12px;line-height:12px;color:#666;font-weight:normal;z-index:33;">Cloudy</div>
<div class="t " style="left:1709.80px;top:1040.20px;font-size:12px;line-height:12px;color:#222;font-weight:normal;z-index:33;transform:scaleX(1.0069);">1:02 PM</div>
<div class="t " style="left:1697.00px;top:1056.70px;font-size:12px;line-height:12px;color:#222;font-weight:normal;z-index:33;transform:scaleX(1.0761);">1/14/2026</div>
</body></html>
